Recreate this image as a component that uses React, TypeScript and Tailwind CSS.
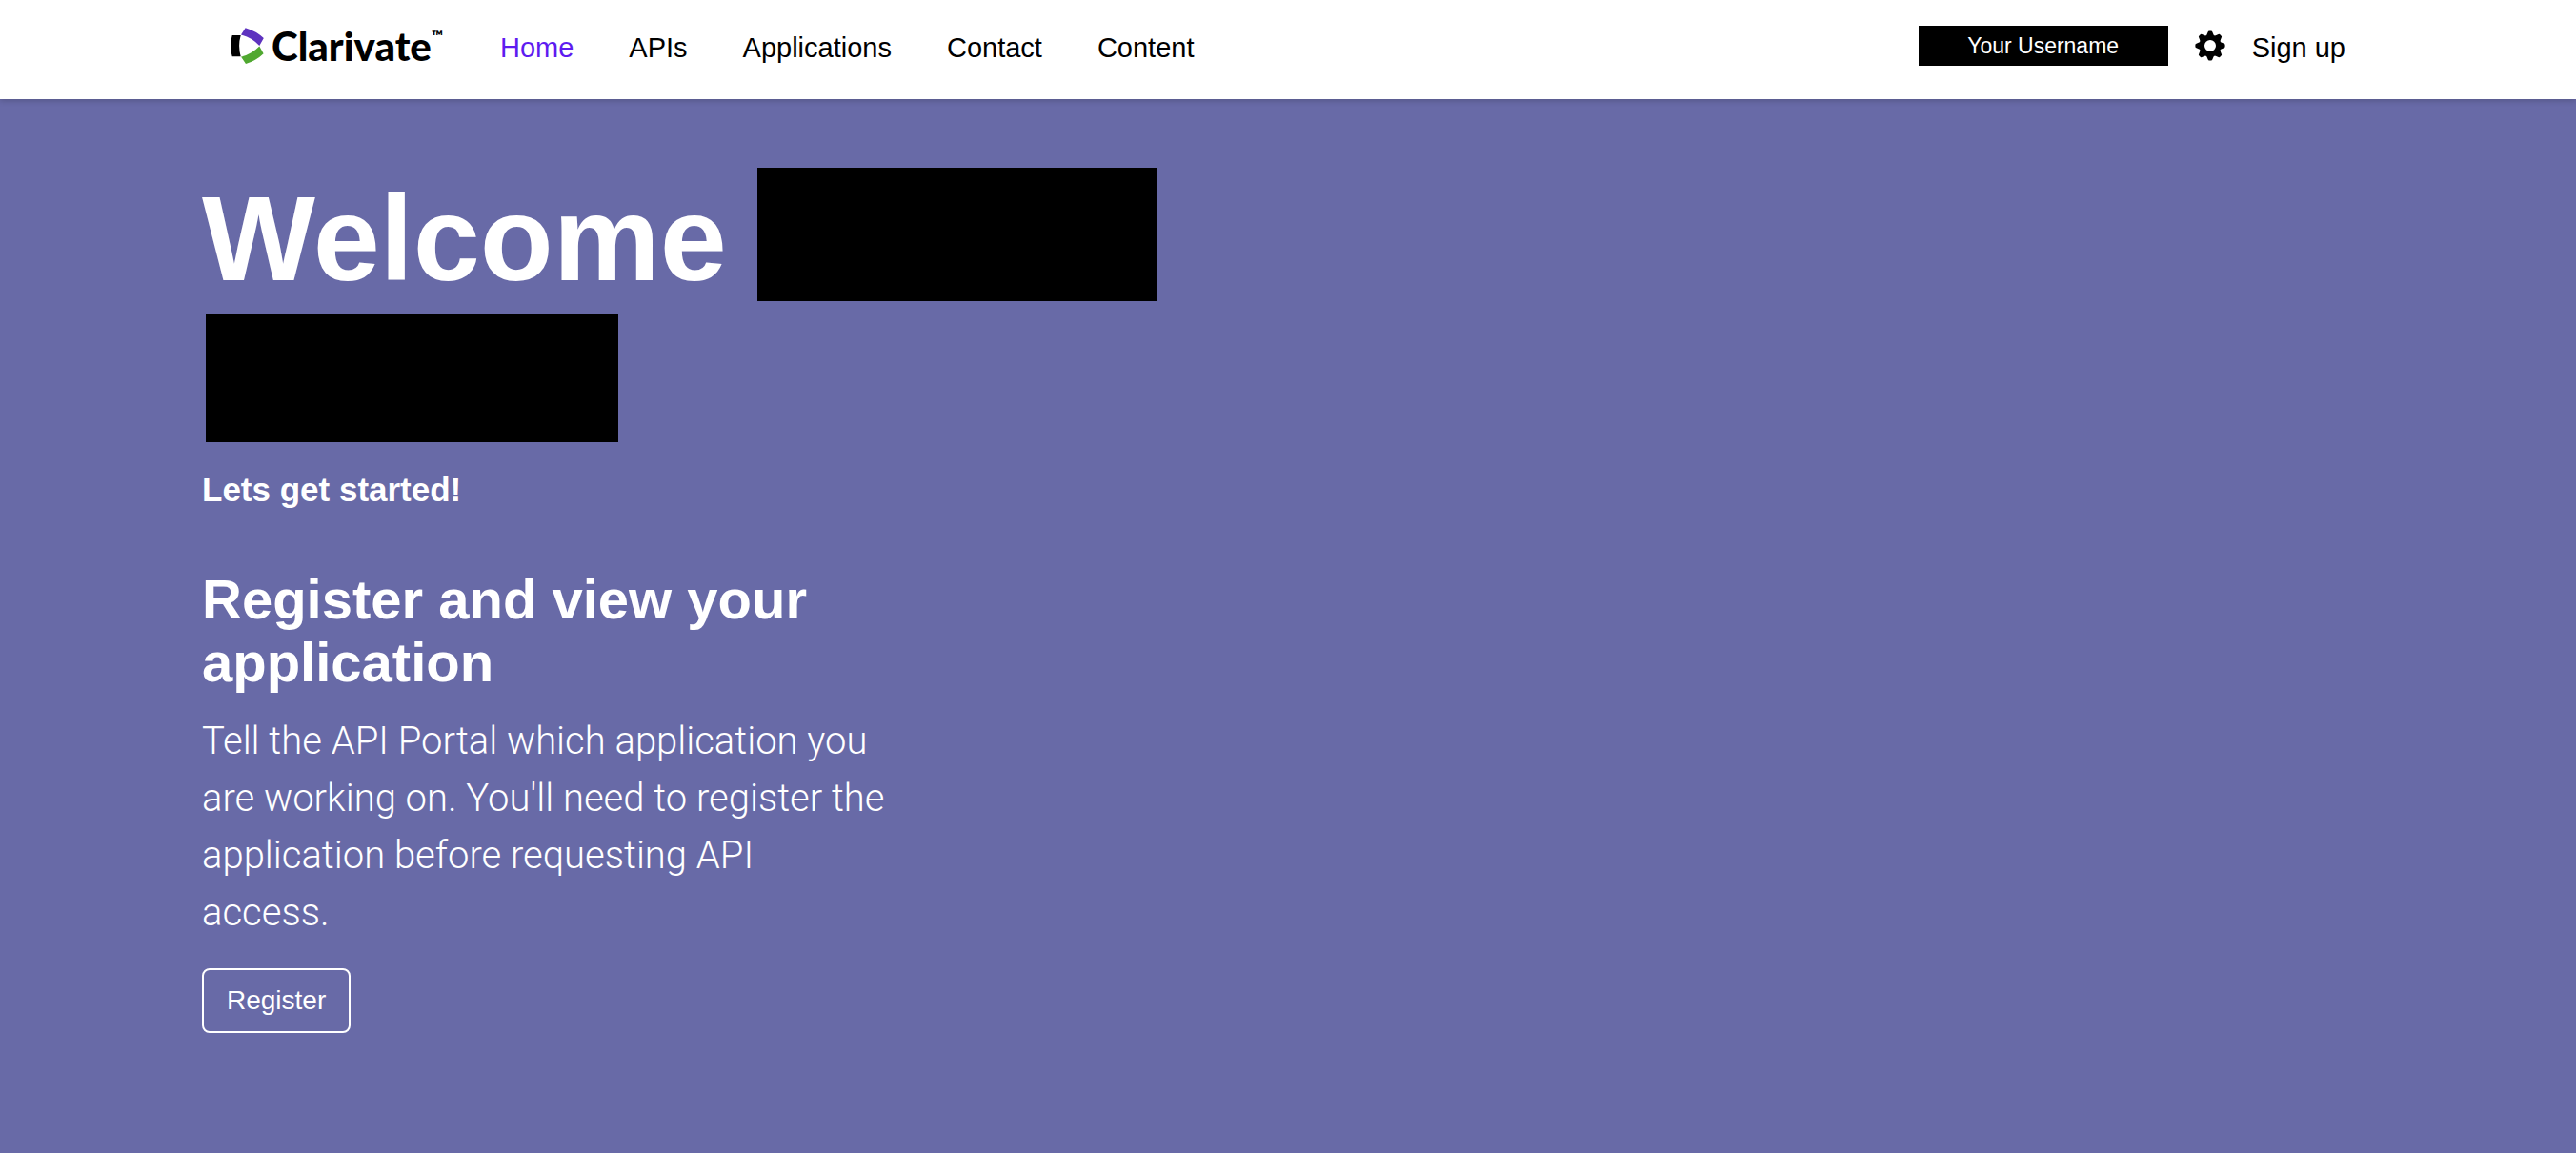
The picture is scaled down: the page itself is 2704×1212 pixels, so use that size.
const links = ["Home", "APIs", "Applications", "Contact", "Content"];
const toothAngles = [0, 45, 90, 135, 180, 225, 270, 315];

function Logo() {
  return (
    <a href="#" aria-label="Clarivate" className="flex items-center gap-2 text-black">
      <svg width="35" height="38" viewBox="0 0 35 38" aria-hidden="true">
        <path d="M1.700 8H10.700Q7.500 19 10.700 30.300H1.700Q-1.500 19 1.700 8Z" fill="#000" />
        <path d="M15.600 .2Q27 3.500 34.800 11L30.300 19Q22 10 11 7.500Z" fill="#5e33bf" />
        <path d="M30.300 19.500L34.600 27.200Q27 34.500 16 38L11 30.500Q22 28 30.300 19.500Z" fill="#50a830" />
      </svg>
      <span className="flex items-start font-['Lato',sans-serif] font-black">
        <span className="text-[42px] leading-[44px]">Clarivate</span>
        <span className="text-[16px] leading-[24px]">™</span>
      </span>
    </a>
  );
}

function Gear() {
  return (
    <svg width="32" height="32" viewBox="-16 -16 32 32" aria-hidden="true">
      <circle r="8.800" fill="none" stroke="currentColor" strokeWidth="5.600" />
      {toothAngles.map((angle) => (
        <path
          key={angle}
          d="M-4 -10.500L-2.300 -14.500Q-2 -15.600 -1 -15.600H1Q2 -15.600 2.300 -14.500L4 -10.500Z"
          transform={`rotate(${angle})`}
          fill="currentColor"
        />
      ))}
    </svg>
  );
}

export default function App() {
  return (
    <div className="min-h-screen bg-white font-['Liberation_Sans',Arial,sans-serif]">
      <header className="relative bg-white shadow-[0_2px_6px_rgba(0,0,0,0.18)]">
        <div className="mx-auto flex h-[104px] max-w-[2280px] items-center px-[30px] pb-2 text-[29px] leading-[42px] text-black">
          <Logo />
          <nav aria-label="Main" className="ml-15 flex items-center gap-[58px] pt-1">
            {links.map((label) => (
              <a key={label} href="#" className={label === "Home" ? "text-[#5e1bf0]" : "text-black"}>
                {label}
              </a>
            ))}
          </nav>
          <div className="ml-auto flex items-center gap-7">
            <span className="flex h-[42px] w-[262px] items-center justify-center bg-black text-[23px] text-white">
              Your Username
            </span>
            <button type="button" aria-label="Settings">
              <Gear />
            </button>
            <a href="#" className="pt-1">Sign up</a>
          </div>
        </div>
      </header>
      <main className="bg-[#686aa7] text-white">
        <div className="mx-auto max-w-[2280px] pt-[72px] pb-[126px]">
          <h1 className="flex max-w-[1080px] flex-wrap items-end gap-x-8 gap-y-[14px] text-[126px] leading-[130px] font-bold">
            <span>Welcome</span>
            <span className="h-[140px] w-[420px] bg-black" />
            <span className="ml-1 h-[134px] w-[433px] bg-black" />
          </h1>
          <p className="mt-[26px] text-[35px] leading-[48px] font-bold">Lets get started!</p>
          <section className="mt-[58px] max-w-[720px]">
            <h2 className="text-[58px] leading-[66px] font-bold">Register and view your application</h2>
            <p className="mt-5 font-['Roboto',sans-serif] text-[40px] leading-[60px] font-light">
              Tell the API Portal which application you are working on. You'll need to register the application before requesting API access.
            </p>
            <button type="button" className="mt-7 h-[68px] rounded-lg border-2 border-white px-6 text-[28px]">
              Register
            </button>
          </section>
        </div>
      </main>
    </div>
  );
}
